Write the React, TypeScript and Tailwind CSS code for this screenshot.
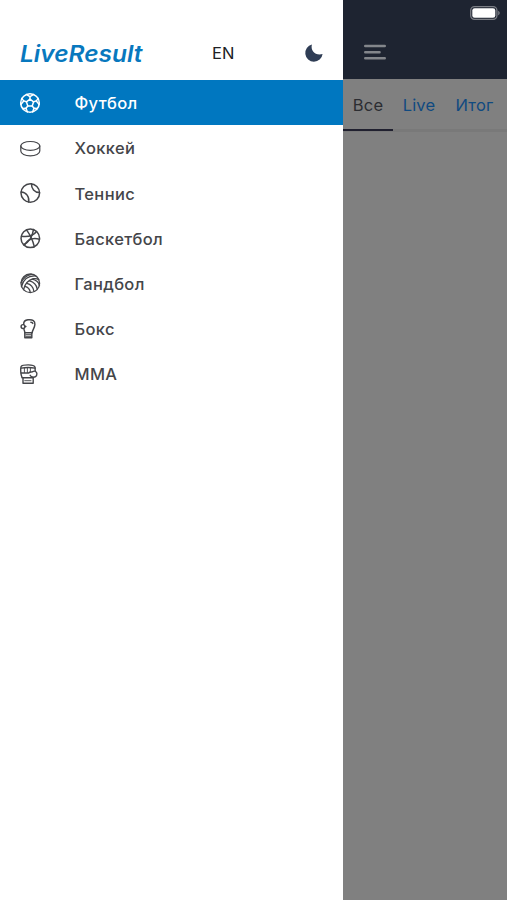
import type { ReactNode } from "react";
import clsx from "clsx";

function Icon({ children }: { children: ReactNode }) {
  return (
    <svg
      viewBox="0 0 22 22"
      className="h-[22px] w-[22px] shrink-0"
      fill="none"
      stroke="currentColor"
      strokeWidth="1.5"
      strokeLinecap="round"
      strokeLinejoin="round"
    >
      {children}
    </svg>
  );
}

const FootballIcon = () => (
  <Icon>
    <circle cx="11" cy="11" r="9.3" />
    <path d="M11 7.2 14.6 9.8 13.2 14H8.8L7.4 9.8Z" />
    <path d="M11 7.2V4.6M14.6 9.8l2.7-.9M13.2 14l1.8 2.3M8.8 14 7 16.3M7.4 9.8l-2.7-.9" />
    <path d="M7.6 2.6 11 4.6l3.4-2M19.3 6.4l-2 2.5 2.9 3.5M18.4 16.6l-3.4-.3-1.4 3.7M8.4 20 7 16.3l-3.4.3M1.8 12.4l2.9-3.5-2-2.5" />
  </Icon>
);

const HockeyIcon = () => (
  <Icon>
    <g strokeWidth="1.2">
      <ellipse cx="11.3" cy="8.9" rx="9.5" ry="4.4" />
      <path d="M1.8 8.9v5.2c0 2.6 4.2 4.7 9.5 4.7s9.5-2.1 9.5-4.7V8.9" />
    </g>
  </Icon>
);

const TennisIcon = () => (
  <Icon>
    <circle cx="11.3" cy="11" r="9.3" />
    <path d="M12.5 1.8c-.3 4.8 3 8.7 8 8.6" />
    <path d="M2.1 10.1c5 .2 8.6 4.5 7.5 10" />
  </Icon>
);

const BasketballIcon = () => (
  <Icon>
    <circle cx="11.3" cy="11.3" r="9.3" />
    <path d="M7.5 2.9c3.6 4.8 6.3 10.2 7.8 16.8" />
    <path d="M2.3 9.2c6.4.9 12.2-.7 15.2-4.7" />
    <path d="M14.5 2.6C13.4 9.3 10.1 15.1 4.7 17.7" />
    <path d="M5.7 17.6c3-5 8.6-7.1 14.8-5.4" />
  </Icon>
);

const HandballIcon = () => (
  <Icon>
    <g strokeWidth="1.35">
      <circle cx="11.3" cy="11.3" r="9.3" />
      <path d="M2.5 14.5C4.3 7.5 9.6 3.5 16.7 3.9" />
      <path d="M2.1 10.6c1.9-4.3 5.3-7.2 10.3-8.3" />
      <path d="M4.6 17.5C5.9 11.9 9.6 8 14.5 6.7c2.3-.3 4 .1 5.3 1" />
      <path d="M10.5 8.9c4.4 1.2 7.1 4.2 7.8 8.2M13.2 7.2c3.8.9 6.3 3 7.3 6" />
      <path d="M7.9 11.4c3.9.9 6.4 4 7 8M5.9 14.4c3 .7 4.9 2.9 5.4 6" />
    </g>
  </Icon>
);

const BoxingIcon = () => (
  <Icon>
    <g strokeWidth="1.45">
      <path d="M4.7 6.4c-.2-2.9 1.2-4.3 4.3-4.6 4.9-.5 7.1.9 6.9 4.6-.2 3.5-2.4 5.4-2.8 8.4H5.8c0-1.8-.8-2.5-.9-4" />
      <circle cx="4" cy="8.5" r="1.9" />
      <path d="M5.8 8.5h1.1M11.9 4.2c1.1.1 1.7.5 1.9 1.2" />
      <path d="M5.8 14.8v5h7v-5" />
      <path d="M6.8 16.7h5M6.8 18.3h5" strokeWidth="1" />
    </g>
  </Icon>
);

const MmaIcon = () => (
  <Icon>
    <g strokeWidth="1.4">
      <path d="M3 14.3C1.6 11.3 1.4 5.8 2.1 3.5c.7-1.3 2.5-1.6 7.1-1.6s6.3.6 6.8 2.2l.2 3.7" />
      <path d="M2.2 5.1c3.9-.7 9.7-.7 13.9 0" />
      <path d="M5.4 5.2v4.3M8.4 5v4.5M11.4 5.1v3.7" strokeWidth=".9" />
      <path d="M2.1 10h7.6c1-1.4 2.3-.8 3.6-1.1 1.9-1.5 4.6-.7 4.6 1.8 0 2.8-2.2 3.9-4.4 3.3-1.1-.2-1.8-.9-2.3-1.7" />
      <path d="M3 14.8h11.5M4 15v5.3h10.2v-5.8" />
      <path d="M5.7 17.7H12" strokeWidth=".9" />
    </g>
  </Icon>
);

const sports = [
  { name: "Футбол", icon: <FootballIcon /> },
  { name: "Хоккей", icon: <HockeyIcon /> },
  { name: "Теннис", icon: <TennisIcon /> },
  { name: "Баскетбол", icon: <BasketballIcon /> },
  { name: "Гандбол", icon: <HandballIcon /> },
  { name: "Бокс", icon: <BoxingIcon /> },
  { name: "ММА", icon: <MmaIcon /> },
];

function Logo() {
  return (
    <svg viewBox="0 0 126 28" className="h-7 w-[126px] overflow-visible" role="img" aria-label="LiveResult">
      <text
        x="0"
        y="22.5"
        textLength="122.5"
        lengthAdjust="spacingAndGlyphs"
        fill="#0878be"
        fontFamily="Inter, sans-serif"
        fontSize="22.5"
        fontWeight="600"
        fontStyle="italic"
      >
        LiveResult
      </text>
    </svg>
  );
}

function Drawer() {
  return (
    <aside className="w-[343px] shrink-0 bg-white">
      <header className="flex h-20 items-end pb-[13px] pl-5 pr-[19px]">
        <Logo />
        <button className="mb-[2px] ml-[66px] h-6 text-[16.5px] leading-6 text-[#202124]">EN</button>
        <svg viewBox="0 0 20 20" className="mb-[4px] ml-auto h-5 w-5" fill="#2f3d55">
          <path d="M7.9 1.5C6.2 7.9 11.6 13.1 18.6 11.1A8.7 8.7 0 1 1 7.9 1.5Z" />
        </svg>
      </header>
      <nav>
        {sports.map((sport, i) => (
          <a
            key={sport.name}
            className={clsx(
              "flex h-[45.2px] items-center gap-[33.5px] pl-[19px] text-[16.5px] font-medium tracking-[0.35px]",
              i === 0 ? "bg-[#0077c0] text-white" : "text-[#444549]"
            )}
          >
            {sport.icon}
            <span className="pt-[2px]">{sport.name}</span>
          </a>
        ))}
      </nav>
    </aside>
  );
}

function PageBehind() {
  return (
    <main className="min-w-0 flex-1 bg-[#808080]">
      <div className="h-[79px] bg-[#1e2431]">
        <div className="flex h-[26px] items-center justify-end pr-[7px]">
          <svg viewBox="0 0 30 14" className="h-[14px] w-[30px]">
            <rect x=".7" y=".7" width="26.2" height="12.6" rx="3.8" fill="none" stroke="#7b7e85" strokeWidth="1.3" />
            <rect x="2.3" y="2.3" width="23" height="9.4" rx="2.3" fill="#fff" />
            <path d="M28.2 4.7c2 .9 2 3.7 0 4.6Z" fill="#7b7e85" />
          </svg>
        </div>
        <svg
          viewBox="0 0 22 16"
          className="ml-[21px] mt-[18px] h-4 w-[22px]"
          stroke="#83868b"
          strokeWidth="2.4"
          strokeLinecap="round"
        >
          <path d="M1.2 2h19.6M1.2 8.2h14.4M1.2 14.3h19.6" />
        </svg>
      </div>
      <div className="flex h-[53px] border-b-[3px] border-[#797979] text-[16.5px] tracking-[0.2px] text-[#104a80]">
        <div className="-mb-[2px] flex w-[50px] items-center justify-center border-b-2 border-[#20202f] pt-[2px] text-[#2c2d32]">
          Все
        </div>
        <div className="flex w-[52px] items-center justify-center pt-[2px]">Live</div>
        <div className="flex w-[59px] items-center justify-center pt-[2px]">Итог</div>
      </div>
    </main>
  );
}

export default function App() {
  return (
    <div className="flex h-[900px] w-[507px] overflow-hidden font-[Inter,sans-serif]">
      <Drawer />
      <PageBehind />
    </div>
  );
}
